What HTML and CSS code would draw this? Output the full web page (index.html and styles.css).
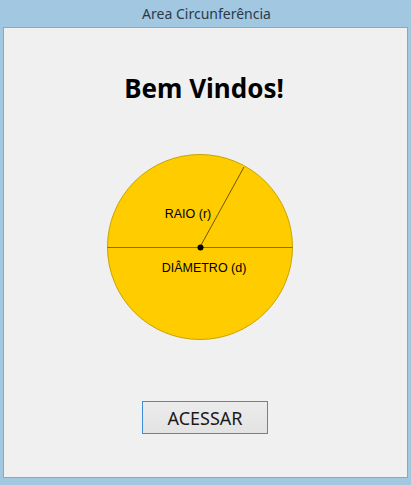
FILE: index.html
```html
<!DOCTYPE html>
<html lang="pt">
<head>
<meta charset="utf-8">
<title>Area Circunferência</title>
<link rel="stylesheet" href="styles.css">
</head>
<body>
<div class="window">
  <div class="titlebar">Area Circunferência</div>
  <div class="client">
    <h1 class="welcome">Bem Vindos!</h1>
    <svg class="diagram" width="190" height="190" viewBox="0 0 190 190">
      <circle cx="95" cy="95" r="92.5" fill="#ffcc00" stroke="#c9a400" stroke-width="1"/>
      <line x1="2.5" y1="95.5" x2="187.5" y2="95.5" stroke="#8a6d00" stroke-width="1"/>
      <line x1="95" y1="95" x2="139" y2="15" stroke="#6e5500" stroke-width="1"/>
      <circle cx="95.5" cy="95.5" r="3" fill="#000"/>
      <text class="lbl" x="83" y="66" text-anchor="middle">RAIO (r)</text>
      <text class="lbl" x="99" y="120" text-anchor="middle">DIÂMETRO (d)</text>
    </svg>
    <button class="btn">ACESSAR</button>
  </div>
</div>
</body>
</html>
```

FILE: styles.css
```css
html, body {
  margin: 0;
  padding: 0;
}
body {
  width: 411px;
  height: 485px;
  background: #a2c7e1;
  font-family: "Noto Sans", "Open Sans", sans-serif;
  overflow: hidden;
}
.window {
  display: flex;
  flex-direction: column;
  height: 485px;
}
.titlebar {
  height: 27px;
  line-height: 27px;
  text-align: center;
  font-size: 14px;
  color: #2b3a48;
  padding-left: 2px;
  box-sizing: border-box;
}
.client {
  margin: 0 3px 7px 3px;
  height: 451px;
  box-sizing: border-box;
  border: 1px solid #86a9c6;
  background: #f0f0f0;
  display: flex;
  flex-direction: column;
  align-items: center;
  padding-top: 44px;
}
.welcome {
  margin: 0;
  font-size: 26px;
  line-height: 32px;
  font-weight: 700;
  color: #000;
  margin-left: -3px;
}
.diagram {
  display: block;
  margin-top: 48px;
  margin-left: -11px;
}
.lbl {
  font-family: "Liberation Sans", Arial, sans-serif;
  font-size: 12.5px;
  fill: #000;
}
.btn {
  margin-top: 59px;
  margin-left: -1px;
  width: 126px;
  height: 33px;
  border: 1px solid #3d8ed6;
  background: linear-gradient(#ececec, #e3e3e3);
  font-family: "Noto Sans", "Open Sans", sans-serif;
  font-size: 18px;
  color: #1a1a1a;
  padding: 0;
}
```
